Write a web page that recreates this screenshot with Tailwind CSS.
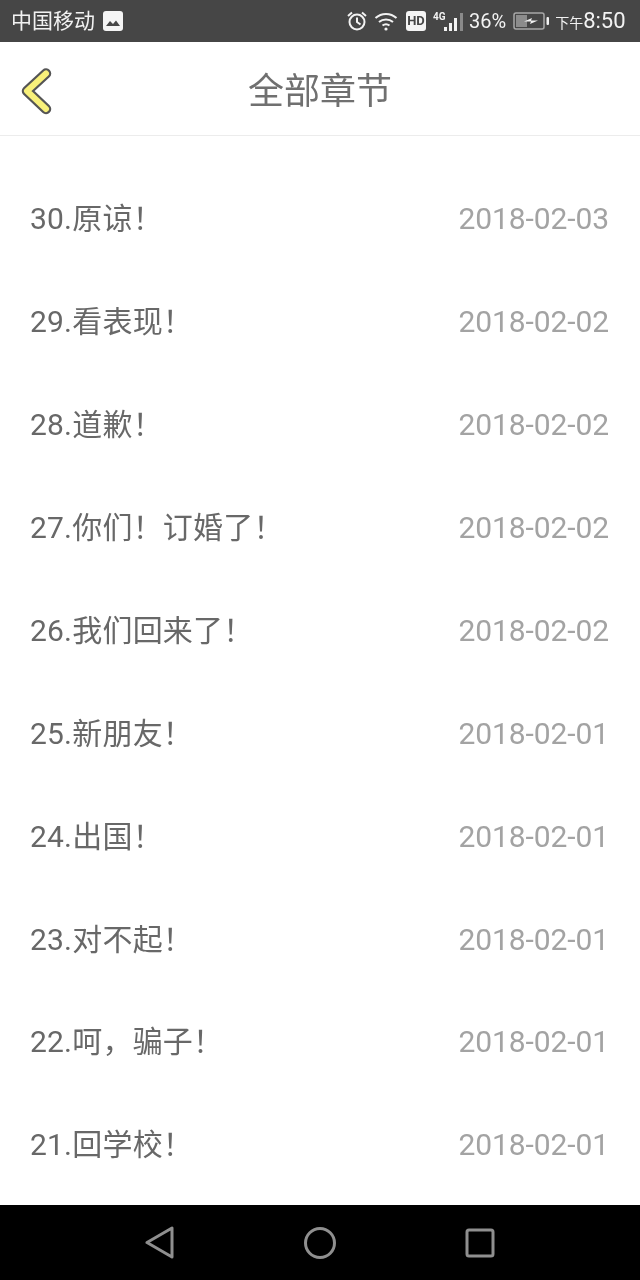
<!DOCTYPE html>
<html lang="zh-CN">
<head>
    <meta charset="UTF-8">
    <title>全部章节</title>
    <script src="https://cdn.jsdelivr.net/npm/@tailwindcss/browser@4"></script>
</head>
<body class="bg-white w-[640px] h-[1280px] overflow-hidden flex flex-col font-['Roboto','Noto_Sans_CJK_SC',sans-serif]">
    <!-- status bar -->
    <div class="h-[42px] shrink-0 bg-[#464646] text-[#f2f2f2] flex items-center pl-[11px] pr-[14px]">
        <span class="text-[21px] leading-none will-change-transform">中国移动</span>
        <svg class="ml-[8px]" width="20" height="20" viewBox="0 0 20 20">
            <rect x="0" y="0" width="20" height="20" rx="3" fill="#f4f4f4"/>
            <path d="M3 15 L7 10 L10 13 L13 9.500 L17 15 Z" fill="#464646"/>
        </svg>
        <div class="ml-auto flex items-center will-change-transform">
            <svg width="22" height="22" viewBox="0 0 22 22" fill="none" stroke="#f2f2f2" stroke-width="2">
                <circle cx="11" cy="12" r="7.500"/>
                <path d="M11 7.500 V12 L14.500 14.500"/>
                <path d="M2 6 L6 2.500 M20 6 L16 2.500"/>
            </svg>
            <svg class="ml-[6px]" width="24" height="20" viewBox="0 0 24 20" fill="none" stroke="#f2f2f2" stroke-width="2">
                <path d="M1.500 7 C7.500 1.500 16.500 1.500 22.500 7"/>
                <path d="M5 11 C9 7.500 15 7.500 19 11"/>
                <path d="M8.500 14.500 C10.500 13 13.500 13 15.500 14.500"/>
                <circle cx="12" cy="18" r="1.600" fill="#f2f2f2" stroke="none"/>
            </svg>
            <span class="ml-[8px] w-[20px] h-[20px] rounded-[3px] bg-[#f4f4f4] text-[#464646] text-[13px] leading-[20px] font-bold text-center">HD</span>
            <div class="ml-[7px] w-[30px] h-[24px] relative">
                <span class="absolute left-0 top-[2px] text-[10px] leading-[12px] font-bold">4G</span>
                <svg class="absolute left-0 top-0" width="30" height="24" viewBox="0 0 30 24" fill="#f2f2f2">
                    <rect x="11" y="18" width="3" height="4"/>
                    <rect x="16" y="14" width="3" height="8"/>
                    <rect x="21" y="9" width="3" height="13"/>
                    <rect x="27" y="4" width="3" height="18" fill="#8a8a8a"/>
                </svg>
            </div>
            <span class="ml-[6px] text-[20px] leading-none">36%</span>
            <svg class="ml-[7px]" width="36" height="18" viewBox="0 0 36 18">
                <rect x="1" y="1" width="30" height="16" rx="2" fill="none" stroke="#a8a8a8" stroke-width="1.500"/>
                <rect x="3" y="3" width="11" height="12" fill="#8c8c8c"/>
                <path d="M11 9.500 L19 6 L18 8.500 L25 8.500 L17 12 L18 9.500 Z" fill="#f2f2f2"/>
                <rect x="33.500" y="5" width="2.500" height="8" rx="1" fill="#f2f2f2"/>
            </svg>
            <span class="ml-[6px] text-[14px] leading-none mt-[4px]">下午</span>
            <span class="text-[22px] leading-none">8:50</span>
        </div>
    </div>

    <!-- header -->
    <div class="h-[94px] shrink-0 relative flex items-center justify-center border-b border-[#ececec] pt-[7px]">
        <svg class="absolute left-[20px] top-[24px]" width="34" height="50" viewBox="0 0 34 50" fill="none" stroke-linecap="round" stroke-linejoin="round">
            <path d="M26 7.500 L7 25 L26 43" stroke="#555" stroke-width="10.500"/>
            <path d="M26 7.500 L7 25 L26 43" stroke="#f8f07a" stroke-width="6"/>
        </svg>
        <h1 class="text-[36px] leading-none text-[#707070] will-change-transform">全部章节</h1>
    </div>

    <!-- chapter list -->
    <div class="flex-1 min-h-0 pt-[31px] pl-[30px] pr-[31px] text-[30px] overflow-hidden will-change-transform">
        <div class="h-[102.95px] flex items-center justify-between"><span class="text-[#686868] tracking-[.2px]">30.原谅！</span><span class="text-[#a3a3a3] tracking-[-.1px]">2018-02-03</span></div>
        <div class="h-[102.95px] flex items-center justify-between"><span class="text-[#686868] tracking-[.2px]">29.看表现！</span><span class="text-[#a3a3a3] tracking-[-.1px]">2018-02-02</span></div>
        <div class="h-[102.95px] flex items-center justify-between"><span class="text-[#686868] tracking-[.2px]">28.道歉！</span><span class="text-[#a3a3a3] tracking-[-.1px]">2018-02-02</span></div>
        <div class="h-[102.95px] flex items-center justify-between"><span class="text-[#686868] tracking-[.2px]">27.你们！订婚了！</span><span class="text-[#a3a3a3] tracking-[-.1px]">2018-02-02</span></div>
        <div class="h-[102.95px] flex items-center justify-between"><span class="text-[#686868] tracking-[.2px]">26.我们回来了！</span><span class="text-[#a3a3a3] tracking-[-.1px]">2018-02-02</span></div>
        <div class="h-[102.95px] flex items-center justify-between"><span class="text-[#686868] tracking-[.2px]">25.新朋友！</span><span class="text-[#a3a3a3] tracking-[-.1px]">2018-02-01</span></div>
        <div class="h-[102.95px] flex items-center justify-between"><span class="text-[#686868] tracking-[.2px]">24.出国！</span><span class="text-[#a3a3a3] tracking-[-.1px]">2018-02-01</span></div>
        <div class="h-[102.95px] flex items-center justify-between"><span class="text-[#686868] tracking-[.2px]">23.对不起！</span><span class="text-[#a3a3a3] tracking-[-.1px]">2018-02-01</span></div>
        <div class="h-[102.95px] flex items-center justify-between"><span class="text-[#686868] tracking-[.2px]">22.呵，骗子！</span><span class="text-[#a3a3a3] tracking-[-.1px]">2018-02-01</span></div>
        <div class="h-[102.95px] flex items-center justify-between"><span class="text-[#686868] tracking-[.2px]">21.回学校！</span><span class="text-[#a3a3a3] tracking-[-.1px]">2018-02-01</span></div>
    </div>

    <!-- navigation bar -->
    <div class="h-[75px] shrink-0 bg-black flex items-center justify-between pl-[144px] pr-[144px]">
        <svg width="32" height="34" viewBox="0 0 32 34" fill="none" stroke="#8f8f8f" stroke-width="3" stroke-linejoin="round"><path d="M28 2 V31 L3 16.500 Z"/></svg>
        <svg width="32" height="32" viewBox="0 0 32 32" fill="none" stroke="#8f8f8f" stroke-width="3"><circle cx="16" cy="16" r="14.500"/></svg>
        <svg width="32" height="32" viewBox="0 0 32 32" fill="none" stroke="#8f8f8f" stroke-width="3" stroke-linejoin="round"><rect x="3" y="3" width="26" height="26" rx="2"/></svg>
    </div>
</body>
</html>
